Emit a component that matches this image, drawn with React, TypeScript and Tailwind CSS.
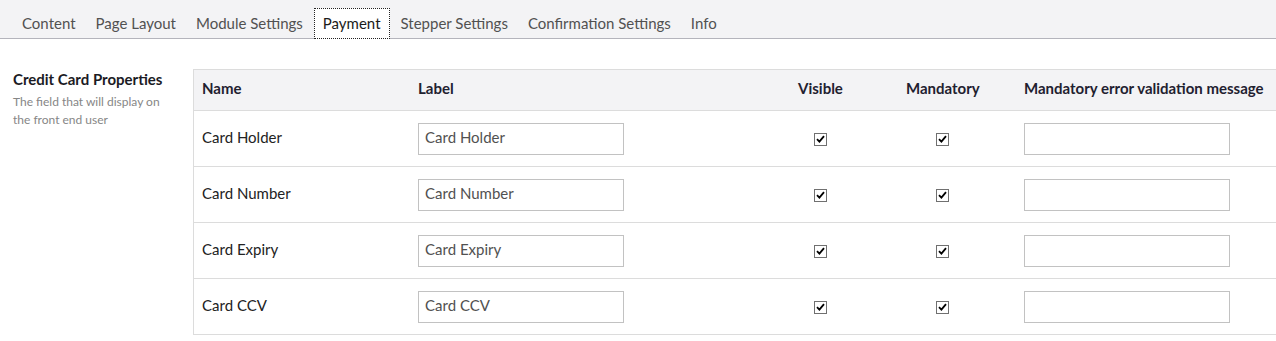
import React from 'react';

const tabs = ['Content', 'Page Layout', 'Module Settings', 'Payment', 'Stepper Settings', 'Confirmation Settings', 'Info'];
const rows = ['Card Holder', 'Card Number', 'Card Expiry', 'Card CCV'];

function Check() {
  return (
    <span className="inline-flex h-[13px] w-[13px] items-center justify-center border border-[#707070] bg-white">
      <svg width="9" height="8" viewBox="0 0 9 8">
        <path d="M1 4.2 L3.4 6.6 L8 1.2" fill="none" stroke="#000" strokeWidth="1.8" />
      </svg>
    </span>
  );
}

function App() {
  return (
    <div className="h-[341px] w-[1276px] bg-white text-[15px] text-[#515151]" style={{ fontFamily: 'Lato, "Open Sans", sans-serif' }}>
      <div className="flex h-[39px] items-end gap-[2px] border-b border-[#b4b4bc] bg-[#f3f3f5] pl-[13px]">
        {tabs.map((t) => (
          <div
            key={t}
            className={
              t === 'Payment'
                ? 'mb-[-1px] flex h-[31px] items-center border border-dotted border-[#222] bg-white px-[8px] text-[#1b1b1b]'
                : 'flex h-[30px] items-center px-[9px]'
            }
          >
            {t}
          </div>
        ))}
      </div>

      <div className="flex pt-[30px]">
        <div className="w-[193px] pl-[13px] pt-[1px]">
          <div className="text-[15px] font-bold leading-[18px] text-[#1b1b24]">Credit Card Properties</div>
          <div className="mt-[5px] w-[160px] text-[12px] leading-[18px] text-[#868686]">The field that will display on the front end user</div>
        </div>

        <div className="flex-1 border-l border-t border-[#dcdcdc]">
          <div className="grid h-[41px] grid-cols-[215px_380px_108px_118px_1fr] items-center border-b border-[#dcdcdc] bg-[#f3f3f5] pb-[3px] text-[15px] font-bold text-[#1f2130]">
            <div className="pl-[8px]">Name</div>
            <div className="pl-[9px]">Label</div>
            <div className="pl-[9px]">Visible</div>
            <div className="pl-[9px]">Mandatory</div>
            <div className="pl-[9px]">Mandatory error validation message</div>
          </div>
          {rows.map((r) => (
            <div key={r} className="grid h-[56px] grid-cols-[215px_380px_108px_118px_1fr] items-center border-b border-[#dcdcdc]">
              <div className="pb-[2px] pl-[8px] text-[#222]">{r}</div>
              <div className="pl-[9px]">
                <div className="flex h-[32px] w-[206px] items-center border border-[#c2c2c2] pb-[2px] pl-[6px]">{r}</div>
              </div>
              <div className="flex pl-[25px] pt-[1px]">
                <Check />
              </div>
              <div className="flex pl-[39px] pt-[1px]">
                <Check />
              </div>
              <div className="pl-[9px]">
                <div className="h-[32px] w-[206px] border border-[#c2c2c2]" />
              </div>
            </div>
          ))}
        </div>
      </div>
    </div>
  );
}

export default App;
